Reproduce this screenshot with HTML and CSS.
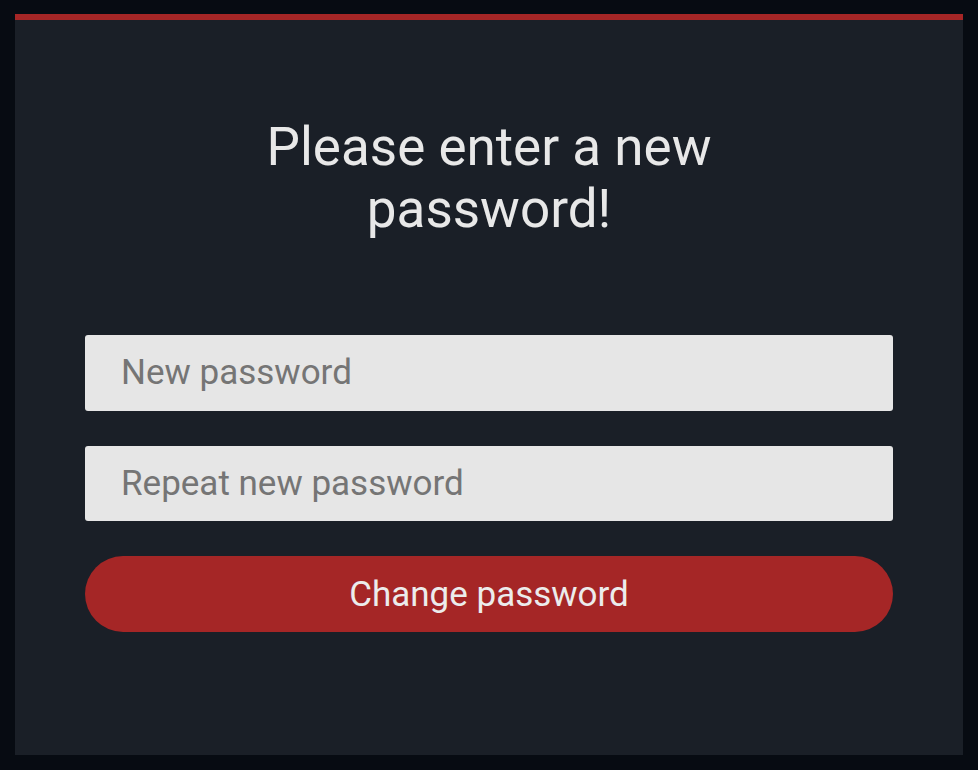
FILE: index.html
```html
<!DOCTYPE html>
<html>
<head>
<meta charset="utf-8">
<link rel="stylesheet" href="styles.css">
</head>
<body>
<div class="page">
  <div class="card">
    <h1 class="title">Please enter a new password!</h1>
    <form class="form">
      <input class="field" type="password" placeholder="New password">
      <input class="field" type="password" placeholder="Repeat new password">
      <button class="btn" type="button">Change password</button>
    </form>
  </div>
</div>
</body>
</html>
```

FILE: styles.css
```css
html, body {
  margin: 0;
  padding: 0;
  background: #070b12;
  font-family: Roboto, "Liberation Sans", sans-serif;
}
.page {
  padding: 14px 15px 15px 15px;
  height: 770px;
  box-sizing: border-box;
}
.card {
  background: #1a1f27;
  border-top: 6px solid #a52626;
  height: 741px;
  box-sizing: border-box;
  padding: 96px 70px 0 70px;
  display: flex;
  flex-direction: column;
  align-items: center;
}
.title {
  margin: 0;
  width: 470px;
  text-align: center;
  font-weight: 400;
  font-size: 53px;
  line-height: 62px;
  color: #e8e8e8;
}
.form {
  margin-top: 95px;
  width: 808px;
  display: flex;
  flex-direction: column;
  gap: 35px;
}
.field {
  height: 75.5px;
  box-sizing: border-box;
  border: none;
  border-radius: 3px;
  background: #e6e6e6;
  padding: 0 36px;
  font-family: Roboto, "Liberation Sans", sans-serif;
  font-size: 35px;
  color: #333;
  outline: none;
}
.field::placeholder {
  color: #757575;
}
.btn {
  height: 76px;
  border: none;
  border-radius: 38px;
  background: #a52626;
  color: #ececec;
  font-family: Roboto, "Liberation Sans", sans-serif;
  font-size: 35px;
}
```
